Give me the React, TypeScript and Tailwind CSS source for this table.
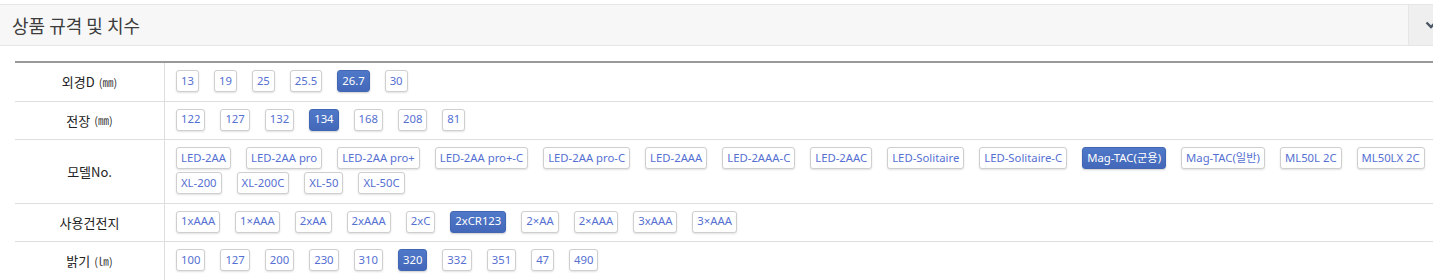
const rows: { label: string; unit?: string; items: string[]; active: string }[] = [
  { label: '외경D', unit: '(㎜)', items: ['13', '19', '25', '25.5', '26.7', '30'], active: '26.7' },
  { label: '전장', unit: '(㎜)', items: ['122', '127', '132', '134', '168', '208', '81'], active: '134' },
  {
    label: '모델No.',
    items: [
      'LED-2AA',
      'LED-2AA pro',
      'LED-2AA pro+',
      'LED-2AA pro+-C',
      'LED-2AA pro-C',
      'LED-2AAA',
      'LED-2AAA-C',
      'LED-2AAC',
      'LED-Solitaire',
      'LED-Solitaire-C',
      'Mag-TAC(군용)',
      'Mag-TAC(일반)',
      'ML50L 2C',
      'ML50LX 2C',
      'XL-200',
      'XL-200C',
      'XL-50',
      'XL-50C',
    ],
    active: 'Mag-TAC(군용)',
  },
  {
    label: '사용건전지',
    items: ['1xAAA', '1×AAA', '2xAA', '2xAAA', '2xC', '2xCR123', '2×AA', '2×AAA', '3xAAA', '3×AAA'],
    active: '2xCR123',
  },
  { label: '밝기', unit: '(㏐)', items: ['100', '127', '200', '230', '310', '320', '332', '351', '47', '490'], active: '320' },
];

function Chip({ text, active }: { text: string; active: boolean }) {
  return (
    <span
      className={
        active
          ? 'mb-[3px] flex h-[22px] items-center rounded-[3px] border border-[#4066b4] bg-linear-to-b from-[#4f78c9] to-[#4468b9] px-[4px] text-[11.3px] text-white shadow-[0_1px_2px_rgba(0,0,0,0.2)]'
          : 'mb-[3px] flex h-[22px] items-center rounded-[3px] border border-[#cfcfcf] bg-white px-[4px] text-[11.3px] text-[#5670d2] shadow-[0_1px_2px_rgba(0,0,0,0.12)]'
      }
    >
      {text}
    </span>
  );
}

export default function App() {
  return (
    <div className="w-full overflow-hidden bg-white font-['Noto_Sans','Noto_Sans_CJK_KR',sans-serif]">
      <div className="w-[1470px] pt-[4px]">
        <div className="flex h-[42px] w-[1452px] border-y border-[#e6e6e6] bg-[#f7f7f7]">
          <h2 className="flex flex-1 items-center pl-[12px] font-['Noto_Sans_CJK_KR',sans-serif] text-[18px] text-[#3d3d3d]">
            상품 규격 및 치수
          </h2>
          <button className="flex w-[44px] items-center justify-center border-l border-[#e6e6e6] bg-[#efefef]">
            <svg width="12" height="8" viewBox="0 0 12 8" fill="none">
              <polyline points="1.5,1.5 6,6 10.5,1.5" stroke="#4b5563" strokeWidth="2.4" />
            </svg>
          </button>
        </div>

        <div className="ml-[15px] mt-[15px] w-[1440px] border-t-2 border-[#999]">
          {rows.map((row) => (
            <div key={row.label} className="flex border-b border-[#dedede]">
              <div className="flex w-[150px] shrink-0 items-center justify-center gap-[4px] border-r border-[#dedede] text-[13px] text-[#222]">
                <span className="font-['Noto_Sans_CJK_KR',sans-serif]">{row.label}</span>
                {row.unit && <span className="font-['Noto_Sans_CJK_KR',sans-serif] text-[11px] text-[#333]">{row.unit}</span>}
              </div>
              <div className="flex flex-1 flex-wrap gap-x-[15px] pb-[5.5px] pl-[11px] pr-[5px] pt-[7px]">
                {row.items.map((item) => (
                  <Chip key={item} text={item} active={item === row.active} />
                ))}
              </div>
            </div>
          ))}
        </div>
      </div>
    </div>
  );
}
